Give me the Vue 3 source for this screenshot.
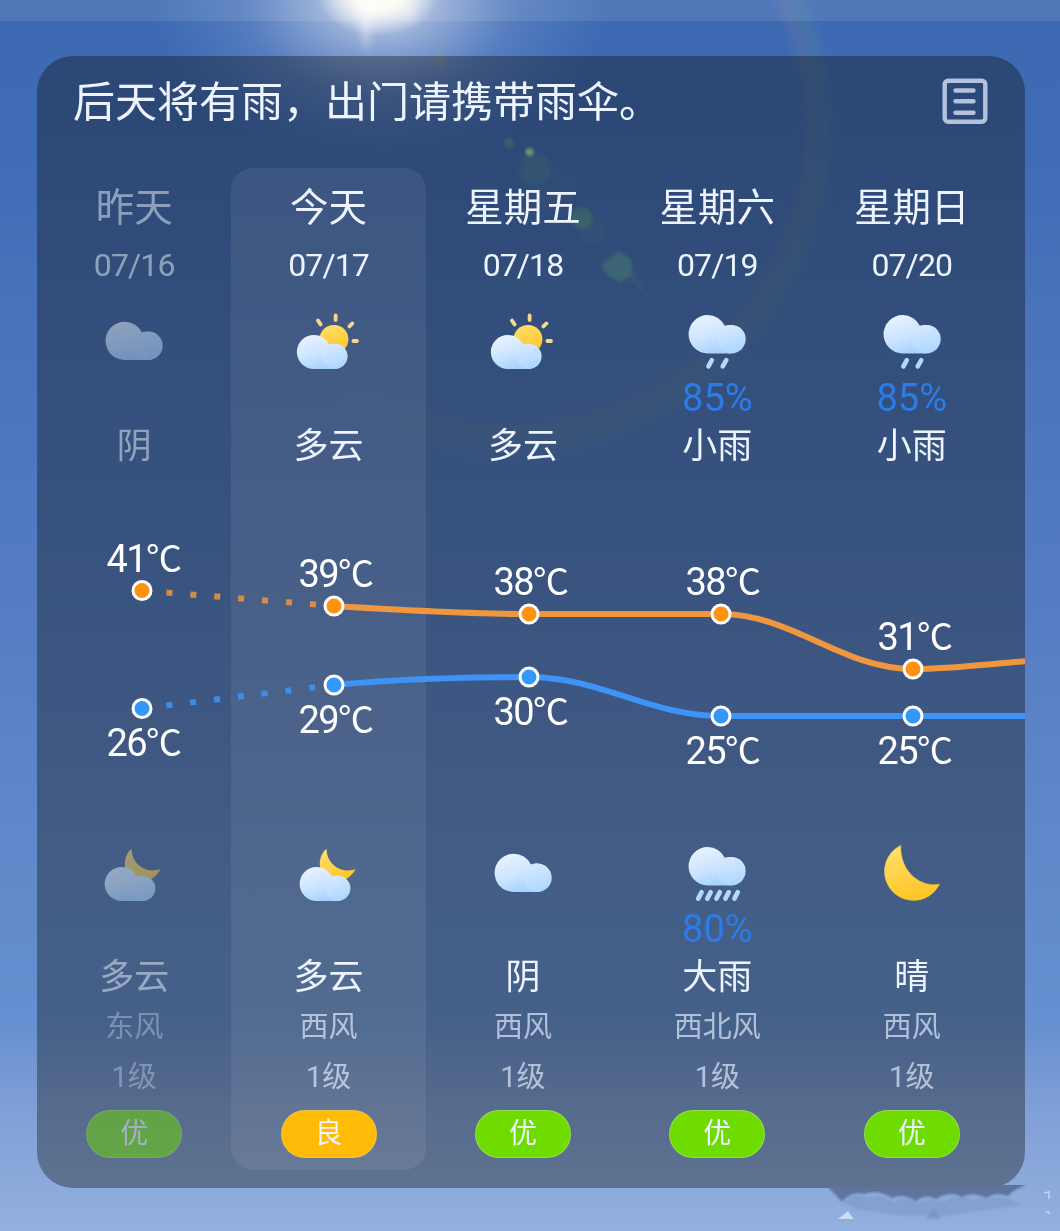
<template>
    <div class="weather-page">
        <svg class="sky" viewBox="0 0 1060 1231" aria-hidden="true">
            <defs>
                <radialGradient id="sunHalo">
                    <stop offset="0" stop-color="#fff" stop-opacity="0.8" />
                    <stop offset="0.3" stop-color="#d3ddf1" stop-opacity="0.52" />
                    <stop offset="0.6" stop-color="#b0c6ec" stop-opacity="0.2" />
                    <stop offset="1" stop-color="#8fb0e8" stop-opacity="0" />
                </radialGradient>
                <radialGradient id="sunCore">
                    <stop offset="0" stop-color="#fffef6" />
                    <stop offset="0.4" stop-color="#fffdf2" stop-opacity="0.95" />
                    <stop offset="1" stop-color="#fff" stop-opacity="0" />
                </radialGradient>
                <linearGradient id="ringCool" gradientUnits="userSpaceOnUse" x1="330" y1="0" x2="560" y2="0">
                    <stop offset="0" stop-color="#6aa68c" stop-opacity="0" />
                    <stop offset="1" stop-color="#6aa68c" />
                </linearGradient>
                <linearGradient id="ringWarm" gradientUnits="userSpaceOnUse" x1="330" y1="0" x2="480" y2="0">
                    <stop offset="0" stop-color="#a08a78" stop-opacity="0" />
                    <stop offset="1" stop-color="#a08a78" />
                </linearGradient>
                <filter id="soft" x="-50%" y="-50%" width="200%" height="200%">
                    <feGaussianBlur stdDeviation="6" />
                </filter>
                <filter id="slight" x="-50%" y="-50%" width="200%" height="200%">
                    <feGaussianBlur stdDeviation="1.5" />
                </filter>
                <filter id="glow" x="-100%" y="-50%" width="300%" height="200%">
                    <feGaussianBlur stdDeviation="4" />
                </filter>
            </defs>
            <ellipse cx="380" cy="0" rx="230" ry="160" fill="url(#sunHalo)" />
            <ellipse cx="378" cy="-8" rx="62" ry="44" fill="url(#sunCore)" />
            <path d="M356 0L366 54L378 0Z" fill="#fff" opacity="0.4" filter="url(#glow)" />
            <path d="M390 0L416 28L414 0Z" fill="#fff" opacity="0.25" filter="url(#glow)" />
            <g fill="none" filter="url(#soft)">
                <path d="M789 -16A316 316 0 0 1 325 387" stroke="url(#ringCool)" stroke-width="10" opacity="0.2" />
                <path d="M778 -10A304 304 0 0 1 325 371" stroke="url(#ringWarm)" stroke-width="8" opacity="0.24" />
            </g>
            <g fill="#68b490" filter="url(#slight)">
                <circle cx="440" cy="60" r="7" fill="#a5a860" opacity="0.2" />
                <circle cx="509" cy="143" r="5" opacity="0.45" />
                <circle cx="529.5" cy="152" r="4" fill="#b4e6b4" opacity="0.9" />
                <circle cx="535" cy="169" r="16" opacity="0.18" />
                <circle cx="548" cy="185" r="28" opacity="0.05" />
                <circle cx="582" cy="218" r="11" opacity="0.42" />
                <circle cx="592" cy="231" r="14" opacity="0.1" />
                <path d="M618 251L631 259L633 273L621 283L607 275L601 265Z" fill="#6ab8a4" opacity="0.5" />
                <path d="M620 272L634 273L650 298Z" opacity="0.2" />
            </g>
        </svg>
        <div class="top-strip"></div>

        <section class="card">
            <header class="card-header">
                <h1>后天将有雨，出门请携带雨伞。</h1>
                <svg class="list-icon" viewBox="0 0 46 46" aria-hidden="true">
                    <rect x="2.7" y="2.7" width="40.6" height="41" rx="3.5" />
                    <path d="M13.5 12.5h18M13.5 23.3h18M13.5 34.8h18" />
                </svg>
            </header>

            <div class="forecast">
                <div class="days">
                    <div
                        v-for="d in days"
                        :key="d.date"
                        class="day"
                        :class="{ past: d.past, today: d.today }"
                    >
                        <div class="name">{{ d.name }}</div>
                        <div class="date">{{ d.date }}</div>
                        <template v-for="(part, i) in [d.day, d.night]" :key="i">
                            <svg class="icon" :class="{ night: i === 1 }" viewBox="0 0 72 64" aria-hidden="true">
                                <template v-if="part.icon === 'sun-cloud'">
                                    <path
                                        class="ray"
                                        d="M42.6 5.5v4.4M25 10.6l2.6 3.8M59.4 13.4l-3 3M60.4 31h3.6"
                                    />
                                    <circle cx="41" cy="29.3" r="14.4" fill="url(#gold)" />
                                </template>
                                <path
                                    v-if="part.icon === 'moon-cloud'"
                                    d="M33.6 6.7C24.5 14 24.5 30 34 37L46 40C54 38 59.5 33 62.6 27C50 32 33.5 23.5 33.6 6.7Z"
                                    fill="url(#gold)"
                                />
                                <path
                                    v-if="part.icon === 'moon'"
                                    d="M24.7 3.4A29 29 0 1 0 63.5 42.3C46 45.5 24 31.5 24.7 3.4Z"
                                    fill="url(#gold)"
                                    stroke="url(#gold)"
                                    stroke-width="0.5"
                                    stroke-linejoin="round"
                                />
                                <g v-if="part.icon !== 'moon'" :transform="cloudPos[part.icon]">
                                    <path
                                        d="M19.2 0A19.2 19.2 0 0 1 36.4 10.7A14.3 14.3 0 1 1 43 38.3H19.2A19.15 19.15 0 0 1 19.2 0Z"
                                        fill="url(#cloud)"
                                    />
                                    <circle cx="43" cy="24" r="14.2" fill="url(#puff)" />
                                </g>
                                <path
                                    v-if="part.icon === 'light-rain'"
                                    class="drops"
                                    d="M30.8 50.2l-3.4 6.2M45.3 50.2l-3.6 6.2"
                                />
                                <path
                                    v-if="part.icon === 'heavy-rain'"
                                    class="drops"
                                    d="M20.6 50.2l-3.4 6.4M29.7 50.2l-3.4 6.4M38.8 50.2l-3.4 6.4M47.8 50.2l-3.4 6.4M56.8 50.2l-3.4 6.4"
                                />
                            </svg>
                            <div class="rate">{{ part.rate }}</div>
                            <div class="cond">{{ part.text }}</div>
                        </template>
                        <div class="wind">{{ d.wind }}</div>
                        <div class="wind level">1级</div>
                        <div class="aqi" :class="{ fair: d.aqi === '良' }">{{ d.aqi }}</div>
                    </div>
                </div>

                <svg class="chart" viewBox="0 0 988 250">
                    <g v-for="s in series" :key="s.id" :class="s.id">
                        <path class="dotted" :d="s.dotted" />
                        <path class="line" :d="s.line" />
                        <circle v-for="(y, i) in s.ys" :key="i" :cx="xs[i]" :cy="y" r="9" />
                        <text v-for="(y, i) in s.ys" :key="i" :x="xs[i] + 1.5" :y="y + s.offset">{{ s.temps[i] }}<tspan class="unit">℃</tspan></text>
                    </g>
                </svg>
            </div>
        </section>

        <svg class="smudge" viewBox="0 0 232 46" aria-hidden="true">
            <defs>
                <linearGradient id="smudgeFade" x1="0" y1="0" x2="0" y2="1">
                    <stop offset="0" stop-color="#5c6f92" />
                    <stop offset="1" stop-color="#6076a2" />
                </linearGradient>
                <filter id="smear">
                    <feGaussianBlur stdDeviation="1.2" />
                </filter>
            </defs>
            <g filter="url(#smear)">
                <path
                    d="M0 2H160Q184 -2 192 -10L198 0Q186 4 180 11Q168 6 158 13Q146 6 134 12Q122 5 108 14Q98 8 88 16Q76 8 64 13Q50 4 36 9Q22 6 14 17Q8 10 0 2Z"
                    fill="url(#smudgeFade)"
                />
                <path
                    d="M16 17Q26 6 40 13Q54 8 66 17Q78 10 92 17Q104 12 116 17Q130 8 144 15Q160 10 182 14L192 20L150 26L116 31L70 30L28 24Z"
                    fill="#7189bb"
                    opacity="0.35"
                />
                <path d="M98 34l8-10 8 10z" fill="#7088b8" opacity="0.5" />
            </g>
            <path d="M10 34Q18 28 20 26Q22 30 26 34Z" fill="#e6ecf5" opacity="0.75" />
            <path d="M216 8l5-1v7M218 27h3v2" stroke="#dce6f8" stroke-width="1.5" fill="none" opacity="0.7" />
        </svg>

        <svg class="defs" width="0" height="0" aria-hidden="true">
            <defs>
                <linearGradient id="cloud" x1="0.15" y1="0.1" x2="0.55" y2="1">
                    <stop offset="0" stop-color="#e6f1ff" />
                    <stop offset="0.5" stop-color="#cde5ff" />
                    <stop offset="1" stop-color="#a4d2ff" />
                </linearGradient>
                <linearGradient id="puff" x1="0.3" y1="0" x2="0.6" y2="1">
                    <stop offset="0" stop-color="#d8eaff" />
                    <stop offset="1" stop-color="#acd6ff" />
                </linearGradient>
                <linearGradient id="gold" x1="0.2" y1="0" x2="0.5" y2="1">
                    <stop offset="0" stop-color="#ffdf6c" />
                    <stop offset="1" stop-color="#ffc526" />
                </linearGradient>
            </defs>
        </svg>
    </div>
</template>

<script setup>
const days = [
    {
        name: '昨天', date: '07/16', past: true,
        day: { icon: 'cloudy', text: '阴' },
        night: { icon: 'moon-cloud', text: '多云' },
        wind: '东风', aqi: '优',
    },
    {
        name: '今天', date: '07/17', today: true,
        day: { icon: 'sun-cloud', text: '多云' },
        night: { icon: 'moon-cloud', text: '多云' },
        wind: '西风', aqi: '良',
    },
    {
        name: '星期五', date: '07/18',
        day: { icon: 'sun-cloud', text: '多云' },
        night: { icon: 'cloudy', text: '阴' },
        wind: '西风', aqi: '优',
    },
    {
        name: '星期六', date: '07/19',
        day: { icon: 'light-rain', text: '小雨', rate: '85%' },
        night: { icon: 'heavy-rain', text: '大雨', rate: '80%' },
        wind: '西北风', aqi: '优',
    },
    {
        name: '星期日', date: '07/20',
        day: { icon: 'light-rain', text: '小雨', rate: '85%' },
        night: { icon: 'moon', text: '晴' },
        wind: '西风', aqi: '优',
    },
];

const cloudPos = {
    cloudy: 'translate(7.5 11.7)',
    'sun-cloud': 'translate(3.8 25) scale(0.888)',
    'moon-cloud': 'translate(6.6 25) scale(0.888)',
    'light-rain': 'translate(7.5 5.1)',
    'heavy-rain': 'translate(7.5 5.1)',
};

const xs = [105, 297, 492, 684, 876];

const series = [
    {
        id: 'high',
        temps: [41, 39, 38, 38, 31],
        ys: [60.5, 76, 84, 84, 139],
        offset: -18.7,
        dotted: 'M105 60.5L297 76',
        line: 'M297 76C362 80 427 84 492 84H684C755 84 805 139 876 139C916 139 950 134 990 131',
    },
    {
        id: 'low',
        temps: [26, 29, 30, 25, 25],
        ys: [178.5, 155, 147, 186, 186],
        offset: 47.5,
        dotted: 'M105 178.5L297 155',
        line: 'M297 155C362 149 427 147 492 147C563 147 613 186 684 186H990',
    },
];
</script>

<style>
body {
    margin: 0;
}
</style>

<style scoped>
.weather-page {
    position: relative;
    box-sizing: border-box;
    width: 1060px;
    height: 1231px;
    padding: 56px 35px 0 37px;
    overflow: hidden;
    color: #edf3ff;
    font-family: Roboto, "Noto Sans CJK SC", sans-serif;
    background: linear-gradient(
        #3d69b2 0,
        #3f6ab4 120px,
        #4872ba 300px,
        #567dc3 620px,
        #628acb 880px,
        #658fd0 1020px,
        #809fd6 1110px,
        #8caadb 1190px,
        #93afde 1231px
    );
}

.sky {
    position: absolute;
    inset: 0;
}

.top-strip {
    position: absolute;
    inset: 0 0 auto;
    height: 21px;
    background: rgba(255, 255, 255, 0.1);
}

.card {
    position: relative;
    height: 1132px;
    border-radius: 36px;
    overflow: hidden;
    background: rgba(10, 10, 4, 0.345);
}

.card-header {
    display: flex;
    align-items: center;
    justify-content: space-between;
    box-sizing: border-box;
    height: 112px;
    padding: 0 37px 22px 36px;
}

.card-header h1 {
    margin: 0;
    padding-top: 3px;
    font-size: 42px;
    line-height: 60px;
    font-weight: 400;
    white-space: nowrap;
}

.list-icon {
    width: 46px;
    height: 46px;
    fill: none;
    stroke: #b4c2dd;
    stroke-width: 4.4;
    stroke-linecap: round;
}

.forecast {
    display: grid;
}

.days {
    grid-area: 1 / 1;
    display: grid;
    grid-template-columns: repeat(5, 194.4px);
}

.day {
    display: flex;
    flex-direction: column;
    align-items: center;
    height: 1002px;
    border-radius: 22px;
}

.today {
    background: rgba(255, 255, 255, 0.07);
}

.past > * {
    opacity: 0.5;
}

.name {
    height: 76px;
    line-height: 79px;
    font-size: 38.5px;
}

.date {
    height: 42px;
    line-height: 42px;
    font-size: 32px;
    letter-spacing: -0.9px;
}

.icon {
    flex: none;
    width: 72px;
    height: 64px;
    margin-top: 24px;
}

.icon.night {
    margin-top: 374px;
}

.ray {
    stroke: #f3d88c;
    stroke-width: 3.8;
    stroke-linecap: round;
}

.drops {
    stroke: #b3d9ff;
    stroke-width: 4.6;
    stroke-linecap: round;
}

.rate {
    height: 48px;
    line-height: 48px;
    font-size: 38px;
    color: #2b7ce6;
}

.cond {
    height: 46px;
    line-height: 50px;
    font-size: 35px;
}

.night + .rate {
    height: 46px;
    line-height: 46px;
}

.night + .rate + .cond {
    height: 48px;
    line-height: 52px;
}

.wind {
    height: 52px;
    line-height: 55px;
    font-size: 29px;
    color: rgba(230, 238, 255, 0.68);
}

.level {
    height: 48px;
    line-height: 50px;
}

.aqi {
    box-sizing: border-box;
    width: 96px;
    height: 48px;
    margin-top: 10px;
    border: 1px solid rgba(200, 220, 170, 0.45);
    border-radius: 24px;
    background: #6fdc00;
    font-size: 28px;
    line-height: 46px;
    text-align: center;
}

.aqi.fair {
    background: #ffbb05;
}

.chart {
    grid-area: 1 / 1;
    width: 988px;
    height: 250px;
    margin-top: 362px;
}

.chart path {
    fill: none;
    stroke-width: 6;
}

.chart .dotted {
    stroke-dasharray: 6 18;
    stroke-dashoffset: -24.5;
    opacity: 0.85;
}

.chart circle {
    stroke: #fff;
    stroke-width: 3;
}

.high path {
    stroke: #ef963e;
}

.high circle {
    fill: #ff930f;
}

.low path {
    stroke: #3e94f5;
}

.low circle {
    fill: #3398fb;
}

.chart text {
    fill: #fff;
    font-size: 38px;
    letter-spacing: -1.6px;
    text-anchor: middle;
}

.chart .unit {
    font-size: 36px;
}

.smudge {
    position: absolute;
    left: 828px;
    top: 1185px;
    width: 232px;
    height: 46px;
}

.defs {
    position: absolute;
}
</style>
